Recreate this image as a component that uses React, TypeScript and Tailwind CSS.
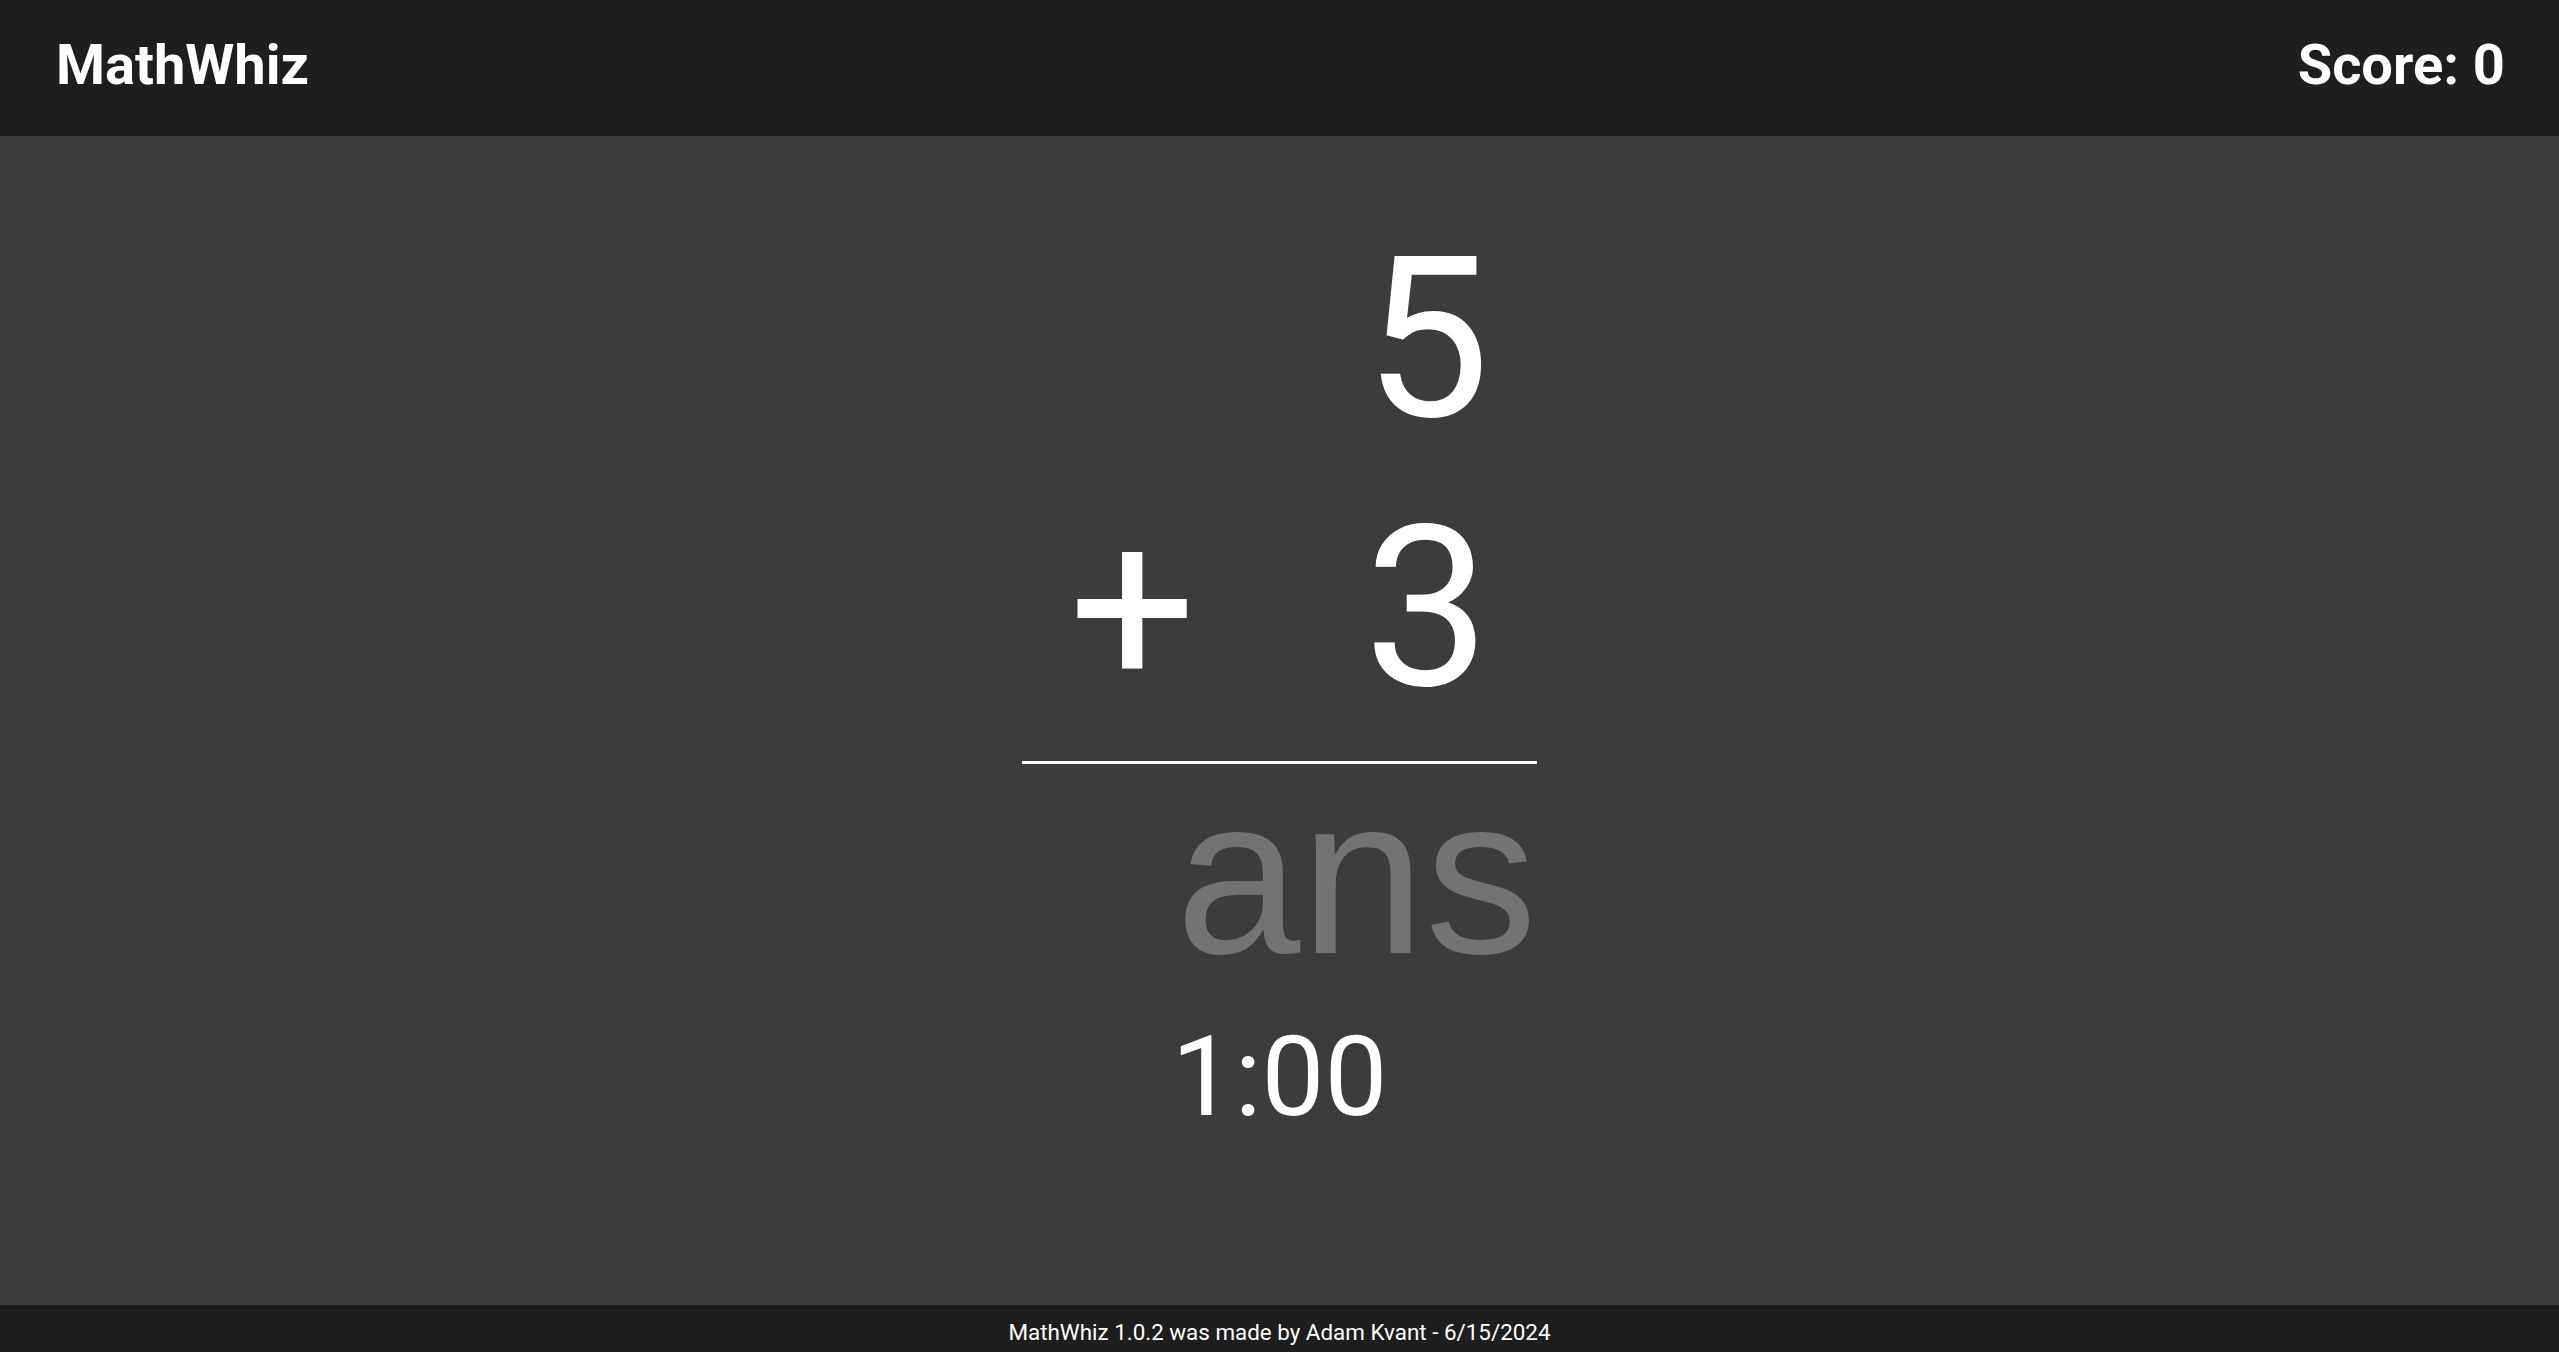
import React from 'react';

export default function App() {
  return (
    <div className="min-h-screen h-[1352px] flex flex-col bg-[#3c3c3c] font-['Roboto',sans-serif] text-white overflow-hidden">
      {/* Top bar */}
      <header className="h-[136px] shrink-0 bg-[#1e1e1e] flex items-center justify-between pl-[56px] pr-[54px] pb-[7px]">
        <span className="text-[56px] font-bold leading-none">MathWhiz</span>
        <span className="text-[56px] font-bold leading-none">Score: 0</span>
      </header>

      {/* Problem */}
      <main className="flex-1 flex flex-col items-center pt-[70px]">
        <div className="w-[515px] flex flex-col">
          <div className="text-[224px] leading-[1.2] text-right pr-[47px]">5</div>
          <div className="flex justify-between px-[47px] text-[224px] leading-[1.2]">
            <span>+</span>
            <span>3</span>
          </div>
          <div className="mt-[17px] h-[3px] bg-white" />
          <input
            type="text"
            placeholder="ans"
            className="h-[224px] w-full bg-transparent text-right text-[224px] leading-none font-['Liberation_Sans',Arial,sans-serif] text-white placeholder:text-[#737373] outline-none p-0 border-0"
          />
          <div className="mt-[23px] text-center text-[112px] leading-[131px]">1:00</div>
        </div>
      </main>

      <footer className="h-[47px] shrink-0 bg-[#1e1e1e] flex justify-center pt-[14px] text-[22.4px] leading-[26px]">
        MathWhiz 1.0.2 was made by Adam Kvant - 6/15/2024
      </footer>
    </div>
  );
}
